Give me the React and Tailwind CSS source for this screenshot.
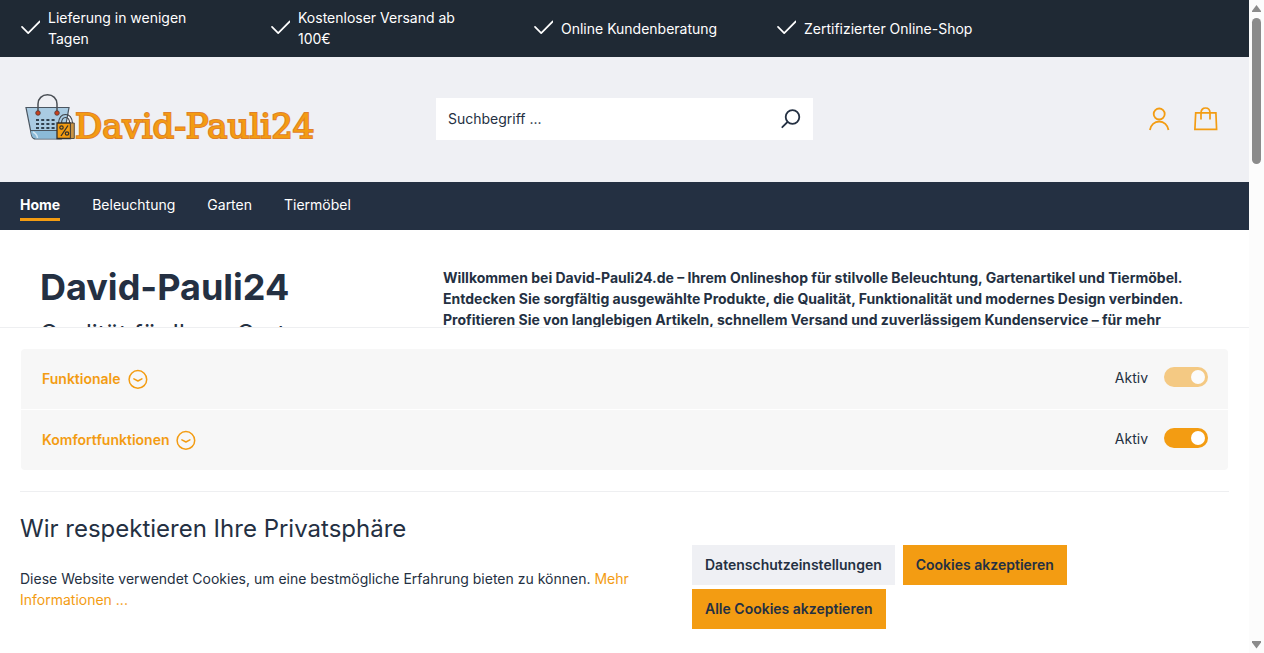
import { useState } from 'react';

const usps = [
  'Lieferung in wenigen Tagen',
  'Kostenloser Versand ab 100€',
  'Online Kundenberatung',
  'Zertifizierter Online-Shop',
];

const navItems = ['Home', 'Beleuchtung', 'Garten', 'Tiermöbel'];

const cookieGroups = [
  { id: 'functional', name: 'Funktionale', locked: true },
  { id: 'comfort', name: 'Komfortfunktionen', locked: false },
];

const CheckIcon = () => (
  <svg className="h-5 w-5 shrink-0" viewBox="0 0 20 20" fill="none" stroke="currentColor" strokeWidth="1.7" aria-hidden="true">
    <path d="M2 8.8l6.2 6.4L19.8 3.4" strokeLinecap="round" strokeLinejoin="round" />
  </svg>
);

const SearchIcon = () => (
  <svg className="h-5 w-5" viewBox="0 0 20 20" fill="none" stroke="currentColor" strokeWidth="1.8" strokeLinecap="round" aria-hidden="true">
    <circle cx="11.5" cy="8" r="6.8" />
    <path d="M6.5 13L1.3 18.2" />
  </svg>
);

const UserIcon = () => (
  <svg className="h-6 w-6" viewBox="0 0 24 24" fill="none" stroke="currentColor" strokeWidth="1.8" aria-hidden="true">
    <circle cx="11.2" cy="7" r="5.5" />
    <path d="M1.9 23c.8-5 4.6-8.5 9.3-8.5s8.5 3.5 9.3 8.5" />
  </svg>
);

const BagIcon = () => (
  <svg className="h-6 w-6" viewBox="0 0 24 24" fill="none" stroke="currentColor" strokeWidth="1.7" aria-hidden="true">
    <path d="M1.7 5.9h20.2l.7 16.4H.9z" />
    <path d="M7 12.5V6c0-3 1.8-5 4.5-5S16 3 16 6v6.5" />
  </svg>
);

const ArrowCircleIcon = () => (
  <svg className="h-5 w-5" viewBox="0 0 20 20" fill="none" stroke="currentColor" strokeWidth="1.5" strokeLinecap="round" aria-hidden="true">
    <circle cx="9.9" cy="10.4" r="8.8" />
    <path d="M5.9 9.8l4 2.2 4-2.2" strokeLinejoin="round" />
  </svg>
);

const LogoBags = () => (
  <svg className="h-[46px] w-[50px] shrink-0" viewBox="0 0 50 46" fill="none" aria-hidden="true">
    <path d="M1 13.5h43l-5 27.5q-1 4-4 4H11q-3.500 0-4.500-4z" fill="#a9cbe2" stroke="#4a5560" strokeWidth="1.2" />
    <path d="M6 36.500h27v8H11q-3.500 0-4.500-4z" fill="#8bbad8" />
    <path d="M6 36.500H32" stroke="#4a5560" strokeWidth="1" />
    <path d="M8 38q4 2 4.500 6" stroke="#d3e5f1" strokeWidth="1.5" />
    <path d="M13 19V10C13 4.500 17 .8 22.500.8S32 4.500 32 10V19" stroke="#4a4f55" strokeWidth="1.5" />
    <circle cx="13" cy="19" r="2.3" fill="#c8401d" stroke="#4b3a38" strokeWidth=".8" />
    <circle cx="32" cy="19" r="2.3" fill="#c8401d" stroke="#4b3a38" strokeWidth=".8" />
    <path d="M11 26h19M11 30h19M11 34h19" stroke="#33424f" strokeWidth="1.9" strokeDasharray="3 2.2" />
    <path d="M33.500 29c.5-5 3-8.500 7-8.500s6.500 3.500 7 8.500M36.500 29c.2-3 1.500-5.500 4-5.500s4 2.500 4.200 5.500" stroke="#3d4248" strokeWidth="1.1" />
    <path d="M32 29h13.500v15.500H32z" fill="#f39c12" stroke="#33302c" strokeWidth="1.3" />
    <path d="M45.500 29h3.800v15.500h-3.800z" fill="#c99445" stroke="#4a4238" strokeWidth=".9" />
    <path d="M43 31.500l-7 10.500" stroke="#33302c" strokeWidth="1.3" />
    <circle cx="36.5" cy="33.5" r="1.7" stroke="#33302c" strokeWidth="1.2" />
    <circle cx="42" cy="39.5" r="1.7" stroke="#33302c" strokeWidth="1.2" />
  </svg>
);

const UspBar = () => (
  <ul className="grid grid-cols-[250fr_263fr_243fr_453fr] items-center bg-[#1f2934] px-5 pt-[7px] pb-2 text-white">
    {usps.map((usp) => (
      <li key={usp} className="flex items-center gap-2 pr-12">
        <CheckIcon />
        {usp}
      </li>
    ))}
  </ul>
);

const Header = () => (
  <header className="grid grid-cols-[416fr_377fr_416fr] items-center bg-[#eff0f4] px-5 pt-[37px] pb-[38px]">
    <a href="#" className="flex items-end pb-1 pl-[5px]">
      <LogoBags />
      <span className="font-['DejaVu_Serif',serif] text-[34px] leading-7 whitespace-nowrap text-[#f39c12] [-webkit-text-stroke:2px_#e0802a] [paint-order:stroke_fill]">
        David-Pauli24
      </span>
    </a>

    <form className="flex h-[42px] bg-white" onSubmit={(e) => e.preventDefault()}>
      <input
        type="search"
        aria-label="Suchbegriff"
        placeholder="Suchbegriff ..."
        className="min-w-0 flex-1 px-3 pb-px outline-none placeholder:text-[#243042]"
      />
      <button type="submit" aria-label="Suchen" className="px-3">
        <SearchIcon />
      </button>
    </form>

    <div className="flex justify-end text-[#f39c12]">
      <button type="button" aria-label="Mein Konto" className="px-[11px] py-2">
        <UserIcon />
      </button>
      <button type="button" aria-label="Warenkorb" className="px-[11px] py-2">
        <BagIcon />
      </button>
    </div>
  </header>
);

const MainNav = () => (
  <nav className="flex h-12 gap-8 bg-[#243042] px-5 pt-3 text-white">
    {navItems.map((item, i) => (
      <a
        key={item}
        href="#"
        className={i === 0 ? 'h-[27px] border-b-3 border-[#f39c12] font-bold' : 'h-[27px]'}
      >
        {item}
      </a>
    ))}
  </nav>
);

const Intro = () => (
  <section className="grid grid-cols-[403fr_766fr] px-10 pt-[37px]">
    <div>
      <h1 className="text-4xl leading-10 font-bold">David-Pauli24</h1>
      <h2 className="mt-3 text-2xl leading-[30px]">Qualität für Ihren Garten</h2>
    </div>
    <p className="font-bold">
      Willkommen bei David-Pauli24.de – Ihrem Onlineshop für stilvolle Beleuchtung, Gartenartikel
      und Tiermöbel. Entdecken Sie sorgfältig ausgewählte Produkte, die Qualität, Funktionalität und
      modernes Design verbinden. Profitieren Sie von langlebigen Artikeln, schnellem Versand und
      zuverlässigem Kundenservice – für mehr
    </p>
  </section>
);

const CookieGroup = ({ group }) => {
  const [active, setActive] = useState(true);

  return (
    <li className="flex items-start justify-between bg-[#f7f7f7] px-5 py-[18px]">
      <button type="button" className="flex h-[23px] items-center gap-[7px] pl-px font-semibold text-[#f39c12]">
        {group.name}
        <ArrowCircleIcon />
      </button>
      <label htmlFor={group.id} className="flex h-6 items-start gap-4">
        Aktiv
        <input
          id={group.id}
          type="checkbox"
          checked={active}
          disabled={group.locked}
          onChange={(e) => setActive(e.target.checked)}
          className="flex h-5 w-11 appearance-none items-center rounded-full bg-gray-300 px-[3px] before:h-3.5 before:w-3.5 before:rounded-full before:bg-white checked:justify-end checked:bg-[#f39c12] disabled:opacity-50"
        />
      </label>
    </li>
  );
};

const CookiePanel = () => (
  <section className="shrink-0 border-t border-[#eeeff1] bg-white px-5 pt-[21px] pb-6">
    <ul className="mx-px flex flex-col gap-px overflow-hidden rounded">
      {cookieGroups.map((group) => (
        <CookieGroup key={group.id} group={group} />
      ))}
    </ul>

    <div className="mt-[21px] grid grid-cols-[672fr_537fr] border-t border-[#eeeff1] pt-[21px]">
      <div className="pr-10">
        <h2 className="text-2xl leading-8">Wir respektieren Ihre Privatsphäre</h2>
        <p className="mt-[23px]">
          Diese Website verwendet Cookies, um eine bestmögliche Erfahrung bieten zu können.{' '}
          <a href="#" className="text-[#f39c12]">
            Mehr Informationen ...
          </a>
        </p>
      </div>
      <div className="flex flex-wrap gap-x-2 gap-y-1 pt-8 font-semibold">
        <button type="button" className="h-10 bg-[#eff0f4] px-[13px] pb-px">
          Datenschutzeinstellungen
        </button>
        <button type="button" className="h-10 bg-[#f39c12] px-[13px] pb-px">
          Cookies akzeptieren
        </button>
        <button type="button" className="h-10 bg-[#f39c12] px-[13px] pb-px">
          Alle Cookies akzeptieren
        </button>
      </div>
    </div>
  </section>
);

const ScrollTrack = () => (
  <div className="flex w-[15px] shrink-0 flex-col items-center bg-[#fcfcfc] pt-[5px] pb-1 text-[#8b8b8b]" aria-hidden="true">
    <svg className="h-2 w-[9px]" viewBox="0 0 9 8" fill="currentColor">
      <path d="M4.5 0L9 6v1H0V6z" />
    </svg>
    <div className="mt-[5px] h-[146px] w-[9px] rounded-full bg-current" />
    <svg className="mt-auto h-2 w-[9px]" viewBox="0 0 9 8" fill="currentColor">
      <path d="M4.5 7.500L0 1.500V0h9v1.500z" />
    </svg>
  </div>
);

const App = () => {
  return (
    <div className="flex h-screen bg-white font-[Inter,sans-serif] text-sm leading-[21px] text-[#243042]">
      <div className="flex min-w-0 flex-1 flex-col">
        <main className="min-h-0 flex-1 overflow-hidden">
          <UspBar />
          <Header />
          <MainNav />
          <Intro />
        </main>
        <CookiePanel />
      </div>
      <ScrollTrack />
    </div>
  );
};

export default App;
